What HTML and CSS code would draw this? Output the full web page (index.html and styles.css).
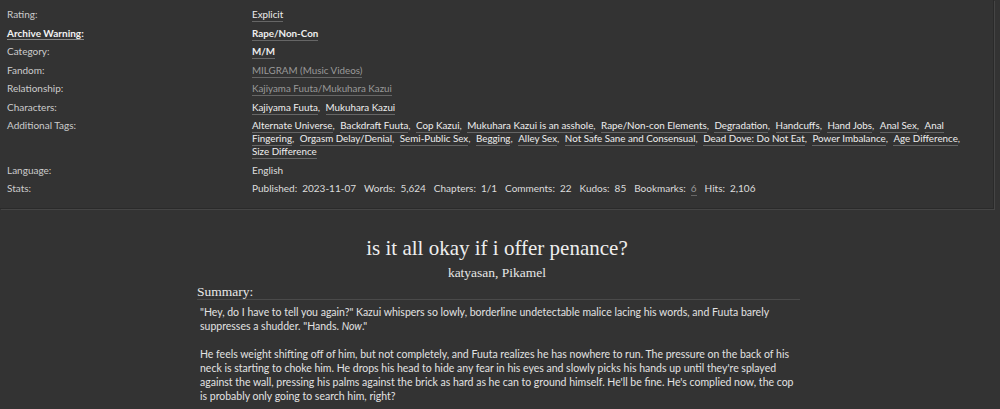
FILE: index.html
```html
<!DOCTYPE html>
<html>
<head>
<meta charset="utf-8">
<link rel="stylesheet" href="styles.css">
</head>
<body>
<div class="page">
  <dl class="meta">
    <dt>Rating:</dt>
    <dd><ul class="tags"><li><a class="tag">Explicit</a></li></ul></dd>
    <dt><a class="help">Archive Warning:</a></dt>
    <dd><ul class="tags"><li><a class="tag strong">Rape/Non-Con</a></li></ul></dd>
    <dt>Category:</dt>
    <dd><ul class="tags"><li><a class="tag strong">M/M</a></li></ul></dd>
    <dt>Fandom:</dt>
    <dd><ul class="tags"><li><a class="tag visited">MILGRAM (Music Videos)</a></li></ul></dd>
    <dt>Relationship:</dt>
    <dd><ul class="tags"><li><a class="tag visited">Kajiyama Fuuta/Mukuhara Kazui</a></li></ul></dd>
    <dt>Characters:</dt>
    <dd><ul class="tags"><li><a class="tag">Kajiyama Fuuta</a>,</li> <li><a class="tag">Mukuhara Kazui</a></li></ul></dd>
    <dt>Additional Tags:</dt>
    <dd><ul class="tags">
      <li><a class="tag">Alternate Universe</a>,</li>
      <li><a class="tag">Backdraft Fuuta</a>,</li>
      <li><a class="tag">Cop Kazui</a>,</li>
      <li><a class="tag">Mukuhara Kazui is an asshole</a>,</li>
      <li><a class="tag">Rape/Non-con Elements</a>,</li>
      <li><a class="tag">Degradation</a>,</li>
      <li><a class="tag">Handcuffs</a>,</li>
      <li><a class="tag">Hand Jobs</a>,</li>
      <li><a class="tag">Anal Sex</a>,</li>
      <li><a class="tag">Anal Fingering</a>,</li>
      <li><a class="tag">Orgasm Delay/Denial</a>,</li>
      <li><a class="tag">Semi-Public Sex</a>,</li>
      <li><a class="tag">Begging</a>,</li>
      <li><a class="tag">Alley Sex</a>,</li>
      <li><a class="tag">Not Safe Sane and Consensual</a>,</li>
      <li><a class="tag">Dead Dove: Do Not Eat</a>,</li>
      <li><a class="tag">Power Imbalance</a>,</li>
      <li><a class="tag">Age Difference</a>,</li>
      <li><a class="tag">Size Difference</a></li>
    </ul></dd>
    <dt>Language:</dt>
    <dd>English</dd>
    <dt>Stats:</dt>
    <dd>
      <dl class="stats">
        <dt>Published:</dt><dd>2023-11-07</dd>
        <dt>Words:</dt><dd>5,624</dd>
        <dt>Chapters:</dt><dd>1/1</dd>
        <dt>Comments:</dt><dd>22</dd>
        <dt>Kudos:</dt><dd>85</dd>
        <dt>Bookmarks:</dt><dd><a class="tag visited">6</a></dd>
        <dt>Hits:</dt><dd>2,106</dd>
      </dl>
    </dd>
  </dl>

  <div class="preface">
    <h2 class="title">is it all okay if i offer penance?</h2>
    <h3 class="byline">katyasan, Pikamel</h3>
    <div class="summary">
      <h3 class="heading">Summary:</h3>
      <blockquote class="userstuff">
        <p>"Hey, do I have to tell you again?" Kazui whispers so lowly, borderline undetectable malice lacing his words, and Fuuta barely suppresses a shudder. "Hands. <em>Now</em>."</p>
        <p>He feels weight shifting off of him, but not completely, and Fuuta realizes he has nowhere to run. The pressure on the back of his neck is starting to choke him. He drops his head to hide any fear in his eyes and slowly picks his hands up until they're splayed against the wall, pressing his palms against the brick as hard as he can to ground himself. He'll be fine. He's complied now, the cop is probably only going to search him, right?</p>
      </blockquote>
    </div>
  </div>
</div>
</body>
</html>
```

FILE: styles.css
```css
html, body {
  margin: 0;
  padding: 0;
  background: #333333;
}
body {
  font-family: Lato, "Liberation Sans", sans-serif;
  font-size: 10px;
  color: #dddddd;
}
.page {
  width: 1000px;
}
.meta {
  margin: 0;
  width: 994px;
  box-sizing: border-box;
  padding: 8px 0 13px 7px;
  display: grid;
  grid-template-columns: 245px 1fr;
  row-gap: 5.5px;
  line-height: 13px;
  border-right: 1px solid #2a2a2a;
  border-bottom: 1px solid #2a2a2a;
  box-shadow: 1px 1px 0 #454545;
}
.meta > dt {
  color: #cccccc;
}
.meta > dd {
  margin: 0;
  padding-right: 22px;
}
.help {
  color: #f2f2f2;
  font-weight: bold;
  border-bottom: 1px solid #8a8a8a;
}
.tags {
  list-style: none;
  margin: 0;
  padding: 0;
  display: inline;
  font-size: 9.8px;
}
.tags li {
  display: inline;
  margin-right: 3px;
}
.tag {
  color: #eeeeee;
  border-bottom: 1px solid #666666;
  padding-bottom: 1px;
}
.tag.strong {
  font-weight: bold;
}
.tag.visited {
  color: #999999;
}
.stats {
  margin: 0;
  display: flex;
}
.stats dt {
  margin-right: 5px;
}
.stats dd {
  margin: 0 8px 0 0;
}
.preface {
  width: 606px;
  margin: 0 auto 0 194px;
  padding-top: 26px;
}
.title {
  font-family: "Liberation Serif", Georgia, serif;
  font-weight: normal;
  font-size: 21px;
  line-height: 26px;
  text-align: center;
  margin: 0;
  color: #eeeeee;
}
.byline {
  font-family: "Liberation Serif", serif;
  font-weight: normal;
  font-size: 13.5px;
  line-height: 18px;
  text-align: center;
  margin: 3px 0 0;
  color: #e6e6e6;
}
.summary .heading {
  font-family: "Liberation Serif", serif;
  font-weight: normal;
  font-size: 13.5px;
  line-height: 12px;
  margin: 4px 0 0 3px;
  padding-bottom: 1px;
  color: #e8e8e8;
  border-bottom: 1px solid #4a4a4a;
}
.userstuff {
  margin: 5px 0 0 6px;
  font-size: 10.5px;
  line-height: 14px;
  color: #e2e2e2;
}
.userstuff p {
  margin: 0 0 14px;
}
```
